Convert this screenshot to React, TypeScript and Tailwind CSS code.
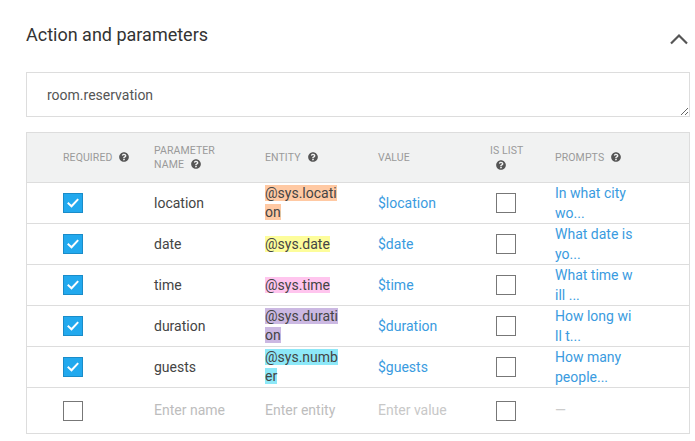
import React from "react";
import { FaQuestionCircle } from "react-icons/fa";

const cols = "grid grid-cols-[36px_91px_111px_113px_112px_65px_1fr]";

type Row = {
  name: string;
  entity: string[];
  bg: string;
  value: string;
  prompt: string[];
};

const rows: Row[] = [
  { name: "location", entity: ["@sys.locati", "on"], bg: "bg-[#ffc9a3]", value: "$location", prompt: ["In what city", "wo..."] },
  { name: "date", entity: ["@sys.date"], bg: "bg-[#fdfd9b]", value: "$date", prompt: ["What date is", "yo..."] },
  { name: "time", entity: ["@sys.time"], bg: "bg-[#ffc5ee]", value: "$time", prompt: ["What time w", "ill ..."] },
  { name: "duration", entity: ["@sys.durati", "on"], bg: "bg-[#cbb8e2]", value: "$duration", prompt: ["How long wi", "ll t..."] },
  { name: "guests", entity: ["@sys.numb", "er"], bg: "bg-[#8de8f8]", value: "$guests", prompt: ["How many", "people..."] },
];

function Checked() {
  return (
    <div className="w-5 h-5 bg-[#22a9ee] border border-[#1a8cc9] flex items-center justify-center">
      <svg width="14" height="14" viewBox="0 0 14 14">
        <polyline points="2.5,7.5 5.5,10.3 11.5,3.8" fill="none" stroke="white" strokeWidth="2" strokeLinecap="square" />
      </svg>
    </div>
  );
}

function Unchecked() {
  return <div className="w-5 h-5 border-[1.5px] border-[#777] bg-white" />;
}

function Help() {
  return <FaQuestionCircle className="inline-block text-[#555] w-[10px] h-[10px] ml-[7px] align-[-1px]" />;
}

export default function App() {
  return (
    <div
      className="bg-white w-[695px] h-[441px] pl-[26px] pr-[5px] pt-[22px]"
      style={{ fontFamily: "Roboto, 'Noto Sans', sans-serif" }}
    >
      <div className="flex items-center justify-between h-[26px]">
        <h2 className="text-[18px] leading-[26px] text-[#333] font-normal">Action and parameters</h2>
        <svg width="20" height="12" viewBox="0 0 20 12" className="mr-[1px] mt-[7px]">
          <polyline points="2,10.5 10,2.5 18,10.5" fill="none" stroke="#555" strokeWidth="2.2" />
        </svg>
      </div>

      <textarea
        readOnly
        defaultValue="room.reservation"
        className="mt-[24px] block w-full h-[45px] border border-[#ddd] pl-5 pt-[12px] text-[14px] leading-[20px] text-[#555] outline-none resize-y"
        style={{ fontFamily: "Roboto, sans-serif" }}
      />

      <div className="mt-[15px] border border-[#ddd]">
        <div className={`${cols} h-[50px] bg-[#f1f2f2] border-b border-[#ddd] items-center text-[10.5px] leading-[14px] text-[#9a9a9a] uppercase tracking-[0.1px]`}>
          <div />
          <div>Required<Help /></div>
          <div>Parameter<br />Name<Help /></div>
          <div>Entity<Help /></div>
          <div>Value</div>
          <div>
            Is list
            <br />
            <FaQuestionCircle className="inline-block text-[#555] w-[10px] h-[10px] ml-[6px]" />
          </div>
          <div>Prompts<Help /></div>
        </div>

        {rows.map((r) => (
          <div key={r.name} className={`${cols} h-[41px] border-b border-[#ddd] items-center text-[14px]`}>
            <div />
            <div><Checked /></div>
            <div className="text-[#444]">{r.name}</div>
            <div className="leading-[19px] text-[#444]">
              {r.entity.map((l, i) => (
                <React.Fragment key={i}>
                  <span className={r.bg}>{l}</span>
                  {i < r.entity.length - 1 && <br />}
                </React.Fragment>
              ))}
            </div>
            <div className="text-[#3a9be0]">{r.value}</div>
            <div className="ml-[6px]"><Unchecked /></div>
            <div className="leading-[20px] text-[#3a9be0]">
              {r.prompt[0]}
              <br />
              {r.prompt[1]}
            </div>
          </div>
        ))}

        <div className={`${cols} h-[45px] items-center text-[14px]`}>
          <div />
          <div><Unchecked /></div>
          <div className="text-[#bdbdbd]">Enter name</div>
          <div className="text-[#bdbdbd]">Enter entity</div>
          <div className="text-[#c8c8c8]">Enter value</div>
          <div className="ml-[6px]"><Unchecked /></div>
          <div className="text-[#ccc]">—</div>
        </div>
      </div>
    </div>
  );
}
